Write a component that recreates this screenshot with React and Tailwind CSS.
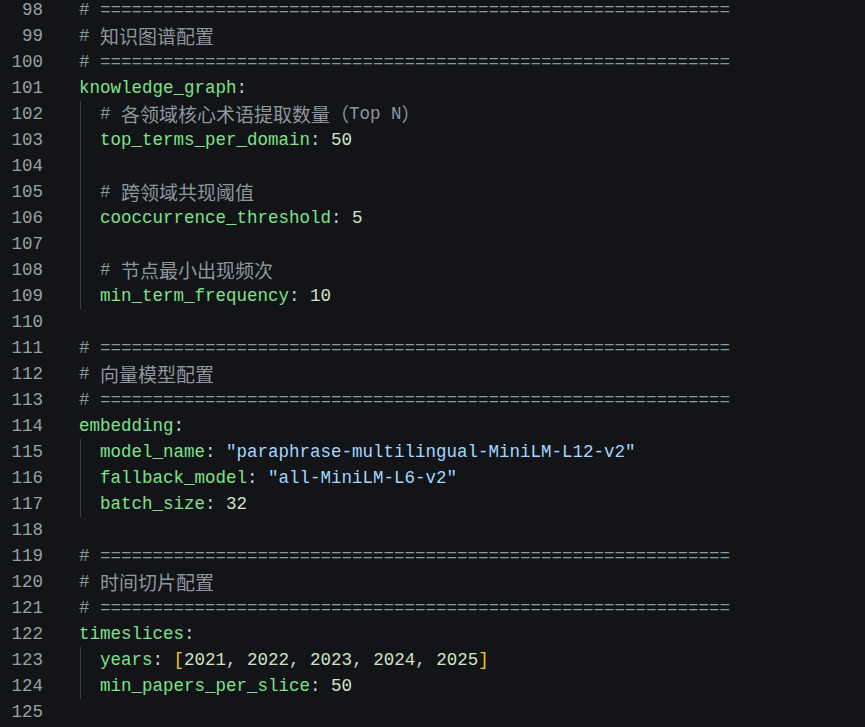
const C = {
  key: 'text-[#7ee28b]',
  punc: 'text-[#c9d1d9]',
  num: 'text-[#d3e4c6]',
  str: 'text-[#a5d6ff]',
  cmt: 'text-[#8f969e]',
  brk: 'text-[#f5c518]',
};

const RULE = '# ' + '='.repeat(60);

// each line: { n, indent, parts: [[text, cls, cjk?]] }
const lines = [
  { n: 97, indent: 0, parts: [['# gap_p', C.cmt], ['            g          gy', C.cmt]] },
  { n: 98, indent: 0, parts: [[RULE, C.cmt]] },
  { n: 99, indent: 0, parts: [['# ', C.cmt], ['知识图谱配置', C.cmt, true]] },
  { n: 100, indent: 0, parts: [[RULE, C.cmt]] },
  { n: 101, indent: 0, parts: [['knowledge_graph', C.key], [':', C.punc]] },
  { n: 102, indent: 1, parts: [['# ', C.cmt], ['各领域核心术语提取数量（', C.cmt, true], ['Top N', C.cmt], ['）', C.cmt, true]] },
  { n: 103, indent: 1, parts: [['top_terms_per_domain', C.key], [': ', C.punc], ['50', C.num]] },
  { n: 104, indent: 1, parts: [] },
  { n: 105, indent: 1, parts: [['# ', C.cmt], ['跨领域共现阈值', C.cmt, true]] },
  { n: 106, indent: 1, parts: [['cooccurrence_threshold', C.key], [': ', C.punc], ['5', C.num]] },
  { n: 107, indent: 1, parts: [] },
  { n: 108, indent: 1, parts: [['# ', C.cmt], ['节点最小出现频次', C.cmt, true]] },
  { n: 109, indent: 1, parts: [['min_term_frequency', C.key], [': ', C.punc], ['10', C.num]] },
  { n: 110, indent: 0, parts: [] },
  { n: 111, indent: 0, parts: [[RULE, C.cmt]] },
  { n: 112, indent: 0, parts: [['# ', C.cmt], ['向量模型配置', C.cmt, true]] },
  { n: 113, indent: 0, parts: [[RULE, C.cmt]] },
  { n: 114, indent: 0, parts: [['embedding', C.key], [':', C.punc]] },
  { n: 115, indent: 1, parts: [['model_name', C.key], [': ', C.punc], ['"paraphrase-multilingual-MiniLM-L12-v2"', C.str]] },
  { n: 116, indent: 1, parts: [['fallback_model', C.key], [': ', C.punc], ['"all-MiniLM-L6-v2"', C.str]] },
  { n: 117, indent: 1, parts: [['batch_size', C.key], [': ', C.punc], ['32', C.num]] },
  { n: 118, indent: 0, parts: [] },
  { n: 119, indent: 0, parts: [[RULE, C.cmt]] },
  { n: 120, indent: 0, parts: [['# ', C.cmt], ['时间切片配置', C.cmt, true]] },
  { n: 121, indent: 0, parts: [[RULE, C.cmt]] },
  { n: 122, indent: 0, parts: [['timeslices', C.key], [':', C.punc]] },
  {
    n: 123,
    indent: 1,
    parts: [
      ['years', C.key],
      [': ', C.punc],
      ['[', C.brk],
      ['2021', C.num], [', ', C.punc],
      ['2022', C.num], [', ', C.punc],
      ['2023', C.num], [', ', C.punc],
      ['2024', C.num], [', ', C.punc],
      ['2025', C.num],
      [']', C.brk],
    ],
  },
  { n: 124, indent: 1, parts: [['min_papers_per_slice', C.key], [': ', C.punc], ['50', C.num]] },
  { n: 125, indent: 0, parts: [] },
];

const CodeLine = ({ line }) => (
  <div className="flex h-[26px] items-stretch">
    <div className="w-[43px] shrink-0 flex items-center justify-end text-[#9aa0a7]">{line.n}</div>
    <div className="pl-[36px] flex items-stretch">
      {line.indent > 0 && <span className="ml-[1px] w-[20px] border-l border-[#3a3f46]" />}
      <div className="flex items-center whitespace-pre">
        {line.parts.map(([text, cls, cjk], i) => (
          <span
            key={i}
            className={`${cls} ${cjk ? "font-['Noto_Sans_CJK_SC',sans-serif] text-[19px]" : ''}`}
          >
            {text}
          </span>
        ))}
      </div>
    </div>
  </div>
);

export default function App() {
  return (
    <div className="min-h-screen w-full overflow-hidden bg-[#121417] font-['Liberation_Mono',monospace] text-[17.5px]">
      <div className="flex flex-col -mt-[29px]">
        {lines.map(line => (
          <CodeLine key={line.n} line={line} />
        ))}
      </div>
    </div>
  );
}
